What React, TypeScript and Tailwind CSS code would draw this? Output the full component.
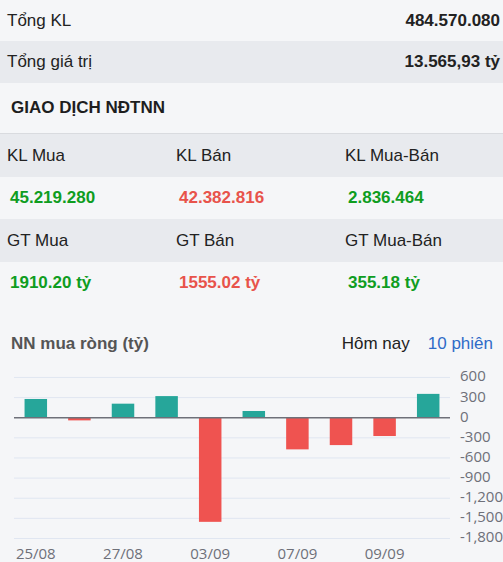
import React from "react";

const sans = { fontFamily: '"Liberation Sans", Arial, sans-serif' };

type Cell = { label: string; value: string; tone: "up" | "down" };

const volumeRow: Cell[] = [
  { label: "KL Mua", value: "45.219.280", tone: "up" },
  { label: "KL Bán", value: "42.382.816", tone: "down" },
  { label: "KL Mua-Bán", value: "2.836.464", tone: "up" },
];

const valueRow: Cell[] = [
  { label: "GT Mua", value: "1910.20 tỷ", tone: "up" },
  { label: "GT Bán", value: "1555.02 tỷ", tone: "down" },
  { label: "GT Mua-Bán", value: "355.18 tỷ", tone: "up" },
];

const sessions = [
  { date: "25/08", net: 279 },
  { date: "26/08", net: -40 },
  { date: "27/08", net: 209 },
  { date: "28/08", net: 322 },
  { date: "03/09", net: -1552 },
  { date: "04/09", net: 100 },
  { date: "07/09", net: -472 },
  { date: "08/09", net: -408 },
  { date: "09/09", net: -273 },
  { date: "10/09", net: 355 },
];

const ticks = [600, 300, 0, -300, -600, -900, -1200, -1500, -1800];

function StatGroup({ cells }: { cells: Cell[] }) {
  return (
    <>
      <div className="grid grid-cols-[169px_169px_1fr] h-[43px] bg-[#e8eaee] items-center text-[17px] text-[#222]">
        {cells.map((c) => (
          <div key={c.label} className="pl-[7px]">
            {c.label}
          </div>
        ))}
      </div>
      <div className="grid grid-cols-[169px_169px_1fr] h-[42px] items-center text-[17px] font-bold">
        {cells.map((c) => (
          <div
            key={c.label}
            className={`pl-[10px] ${c.tone === "up" ? "text-[#0f9d1f]" : "text-[#e8534b]"}`}
          >
            {c.value}
          </div>
        ))}
      </div>
    </>
  );
}

function NetChart() {
  const left = 14;
  const right = 450;
  const zeroY = 58.7;
  const step = 20.13; // px per 300
  const yOf = (v: number) => zeroY - (v / 300) * step;
  const slot = (right - left) / sessions.length;
  const barW = 22.5;
  const labelFont = { fontFamily: '"Open Sans", sans-serif' };

  return (
    <svg width={503} height={204} className="block">
      {ticks.map((t) =>
        t === 0 ? null : (
          <line key={t} x1={left} x2={right} y1={yOf(t)} y2={yOf(t)} stroke="#e0e6f1" strokeWidth={1} />
        )
      )}
      {sessions.map((s, i) => {
        const cx = left + slot * (i + 0.5);
        const y = s.net >= 0 ? yOf(s.net) : zeroY;
        const h = Math.abs(yOf(s.net) - zeroY);
        return (
          <rect
            key={s.date}
            x={cx - barW / 2}
            y={y}
            width={barW}
            height={h}
            fill={s.net >= 0 ? "#26a69a" : "#ef5350"}
          />
        );
      })}
      <line x1={left} x2={right} y1={zeroY} y2={zeroY} stroke="#6e7079" strokeWidth={1.5} />
      {ticks.map((t) => (
        <text
          key={`l${t}`}
          x={460}
          y={yOf(t)}
          dominantBaseline="middle"
          fontSize={15}
          fill="#6e7079"
          style={labelFont}
        >
          {t.toLocaleString("en-US")}
        </text>
      ))}
      {sessions.map((s, i) =>
        i % 2 === 0 ? (
          <text
            key={`d${s.date}`}
            x={left + slot * (i + 0.5)}
            y={200}
            textAnchor="middle"
            fontSize={15}
            fill="#6e7079"
            style={labelFont}
          >
            {s.date}
          </text>
        ) : null
      )}
    </svg>
  );
}

export default function App() {
  return (
    <div className="w-[503px] h-[562px] overflow-hidden bg-[#f5f6f8]" style={sans}>
      <div className="flex justify-between items-center h-[41px] pl-[7px] pr-[3px] text-[17px] text-[#222]">
        <span>Tổng KL</span>
        <span className="font-bold">484.570.080</span>
      </div>
      <div className="flex justify-between items-center h-[42px] pl-[7px] pr-[3px] bg-[#e8eaee] text-[17px] text-[#222]">
        <span>Tổng giá trị</span>
        <span className="font-bold">13.565,93 tỷ</span>
      </div>
      <div className="h-[50px] flex items-center pl-[11px] text-[17px] font-bold text-[#1e1e1e]">
        GIAO DỊCH NĐTNN
      </div>
      <div className="border-t border-[#d9dbdf]">
        <StatGroup cells={volumeRow} />
        <StatGroup cells={valueRow} />
      </div>
      <div className="pt-[25px]">
        <div className="flex items-center justify-between h-[30px] pl-[11px] pr-[10px] text-[17px]">
          <span className="font-bold text-[#555]">NN mua ròng (tỷ)</span>
          <div className="flex gap-[18px]">
            <span className="text-[#222]">Hôm nay</span>
            <span className="text-[#2f6bc7]">10 phiên</span>
          </div>
        </div>
        <NetChart />
      </div>
    </div>
  );
}
